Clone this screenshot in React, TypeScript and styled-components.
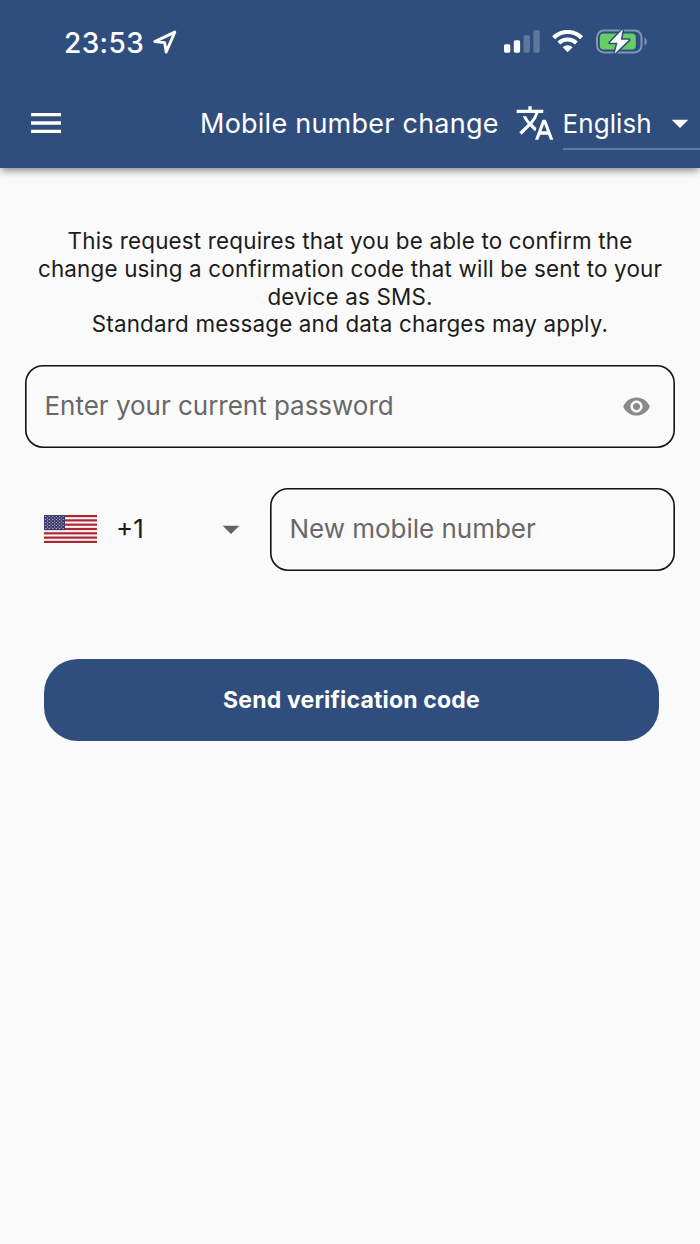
import React from "react";
import styled, { createGlobalStyle } from "styled-components";
import { MdMenu, MdTranslate, MdArrowDropDown, MdRemoveRedEye } from "react-icons/md";

const navy = "#2f4e7e";

const GlobalStyle = createGlobalStyle`
  * { box-sizing: border-box; }
  body { margin: 0; background: #fafafa; }
  svg { display: block; flex-shrink: 0; }
`;

const Screen = styled.div`
  width: 700px;
  height: 1244px;
  overflow: hidden;
  background: #fafafa;
  color: #1c1c1c;
  font-family: Inter, "Liberation Sans", sans-serif;
`;

const Header = styled.header`
  height: 168.4px;
  background: ${navy};
  color: #fff;
  box-shadow: 0 4px 7px -1px rgba(0, 0, 0, 0.36), 0 1px 10px rgba(0, 0, 0, 0.12);
`;

const StatusBar = styled.div`
  display: flex;
  align-items: center;
  height: 78px;
  padding: 6px 53px 0 64px;
`;

const Clock = styled.span`
  width: 88.5px;
  padding-top: 1px;
  font-size: 28px;
  font-weight: 550;
  line-height: 34px;
  letter-spacing: 0.4px;
  white-space: nowrap;
`;

const StatusIcons = styled.div`
  display: flex;
  align-items: center;
  gap: 12px;
  margin-left: auto;
`;

const AppBar = styled.div`
  display: flex;
  align-items: center;
  height: 90px;
  padding-left: 26px;
`;

const Title = styled.h1`
  width: 300px;
  margin: 0 14.5px 0 134px;
  padding-top: 2px;
  font-size: 27px;
  font-weight: 400;
  line-height: 36px;
  letter-spacing: 0.24px;
  white-space: nowrap;
`;

const LanguageSelect = styled.div`
  display: flex;
  align-items: center;
  justify-content: space-between;
  width: 137.5px;
  height: 54px;
  margin-left: 8px;
  padding-top: 2px;
  border-bottom: 2px solid #647a9f;
  font-size: 26px;
  line-height: 36px;
  letter-spacing: 0.08px;
`;

const LanguageName = styled.span`
  padding-top: 2px;
`;

const Form = styled.main`
  display: flex;
  flex-direction: column;
  padding: 58.6px 25px 0;
`;

const Notice = styled.p`
  margin: 0 0 26.5px;
  font-size: 22.4px;
  line-height: 27.8px;
  letter-spacing: 0.19px;
  text-align: center;
  white-space: nowrap;
`;

const Field = styled.div<{ $width: number }>`
  display: flex;
  align-items: center;
  justify-content: space-between;
  width: ${(p) => p.$width}px;
  height: 83px;
  padding: 0 24.5px 0 19.5px;
  border-radius: 18px;
  box-shadow: inset 0 0 0 1.6px #111;
  color: #686868;
`;

const Placeholder = styled.span`
  font-size: 26px;
  line-height: 36px;
  letter-spacing: -0.02px;
  white-space: nowrap;
`;

const PhoneRow = styled.div`
  display: flex;
  justify-content: space-between;
  margin-top: 40px;
`;

const CountrySelect = styled.div`
  display: flex;
  align-items: center;
  width: 226px;
  height: 83px;
  padding-left: 19px;
`;

const DialCode = styled.span`
  flex: 1;
  margin-left: 19px;
  font-size: 26px;
  line-height: 36px;
`;

const SubmitButton = styled.button`
  width: 615px;
  height: 82px;
  margin: 88px 0 0 19px;
  padding: 0;
  border: 0;
  border-radius: 34px;
  background: ${navy};
  color: #fff;
  font-family: inherit;
  font-size: 23px;
  font-weight: 700;
  line-height: 28px;
  letter-spacing: 0.18px;
`;

const LocationArrow = () => (
  <svg width="24" height="24" viewBox="0 0 24 24" fill="none">
    <path d="M1.8 11.6 21.8 2.1 13.2 22 11.6 12.6Z" stroke="#fff" strokeWidth="2.9" strokeLinejoin="round" />
  </svg>
);

const Signal = () => (
  <svg width="36" height="24" viewBox="0 0.8 36 24" fill="#fff">
    <rect x="0" y="15" width="6.3" height="8.5" rx="1.6" />
    <rect x="9.8" y="11" width="6.3" height="12.5" rx="1.6" />
    <rect x="19.6" y="6" width="6.3" height="17.5" rx="1.6" opacity=".24" />
    <rect x="29.4" y="1" width="6.3" height="22.5" rx="1.6" opacity=".24" />
  </svg>
);

const Wifi = () => (
  <svg width="32" height="24" viewBox="0.4 0.9 32 24" fill="none">
    <path d="M2 8.6a20 20 0 0 1 28 0" stroke="#fff" strokeWidth="4.2" />
    <path d="M7.2 13.9a12.6 12.6 0 0 1 17.6 0" stroke="#fff" strokeWidth="4" />
    <path d="M11 18.1a7.4 7.4 0 0 1 10 0L16 23.2Z" fill="#fff" />
  </svg>
);

const Battery = () => (
  <svg width="51" height="28" viewBox="0 0.6 51 28">
    <rect x="1" y="3" width="44.5" height="22" rx="7" fill="none" stroke="#8295b4" strokeWidth="2" />
    <path d="M48.5 10v8c3-1.5 3-6.5 0-8Z" fill="#8295b4" />
    <rect x="3.8" y="6" width="36" height="16" rx="4" fill="#65ce67" />
    <path d="M26.8 1.8 13.8 15.4h7.7L18.6 26.4 33 12.4h-8.2Z" fill="#fff" stroke={navy} strokeWidth="3" strokeLinejoin="round" paintOrder="stroke" />
  </svg>
);

const UsFlag = () => (
  <svg width="53" height="28" viewBox="0 0 53 28">
    <rect width="53" height="28" fill="#f8f3f4" />
    {Array.from({ length: 7 }, (_, i) => (
      <rect key={i} y={(i * 56) / 13} width="53" height={28 / 13} fill="#af2431" />
    ))}
    <rect width="21" height="15.1" fill="#3d3d70" />
    {Array.from({ length: 9 }, (_, row) =>
      Array.from({ length: row % 2 ? 5 : 6 }, (_, col) => (
        <circle key={`${row}-${col}`} cx={1.8 + col * 3.48 + (row % 2 ? 1.74 : 0)} cy={1.5 + row * 1.5} r=".6" fill="#d0d0e0" />
      ))
    )}
  </svg>
);

export default function App() {
  return (
    <Screen>
      <GlobalStyle />
      <Header>
        <StatusBar>
          <Clock>23:53</Clock>
          <LocationArrow />
          <StatusIcons>
            <Signal />
            <Wifi />
            <Battery />
          </StatusIcons>
        </StatusBar>
        <AppBar>
          <MdMenu size={40} />
          <Title>Mobile number change</Title>
          <MdTranslate size={40} />
          <LanguageSelect>
            <LanguageName>English</LanguageName>
            <MdArrowDropDown size={40} />
          </LanguageSelect>
        </AppBar>
      </Header>
      <Form>
        <Notice>
          This request requires that you be able to confirm the
          <br />
          change using a confirmation code that will be sent to your
          <br />
          device as SMS.
          <br />
          Standard message and data charges may apply.
        </Notice>
        <Field $width={650}>
          <Placeholder>Enter your current password</Placeholder>
          <MdRemoveRedEye size={29} color="#8a8a8a" />
        </Field>
        <PhoneRow>
          <CountrySelect>
            <UsFlag />
            <DialCode>+1</DialCode>
            <MdArrowDropDown size={40} color="#636363" />
          </CountrySelect>
          <Field $width={405}>
            <Placeholder>New mobile number</Placeholder>
          </Field>
        </PhoneRow>
        <SubmitButton>Send verification code</SubmitButton>
      </Form>
    </Screen>
  );
}
